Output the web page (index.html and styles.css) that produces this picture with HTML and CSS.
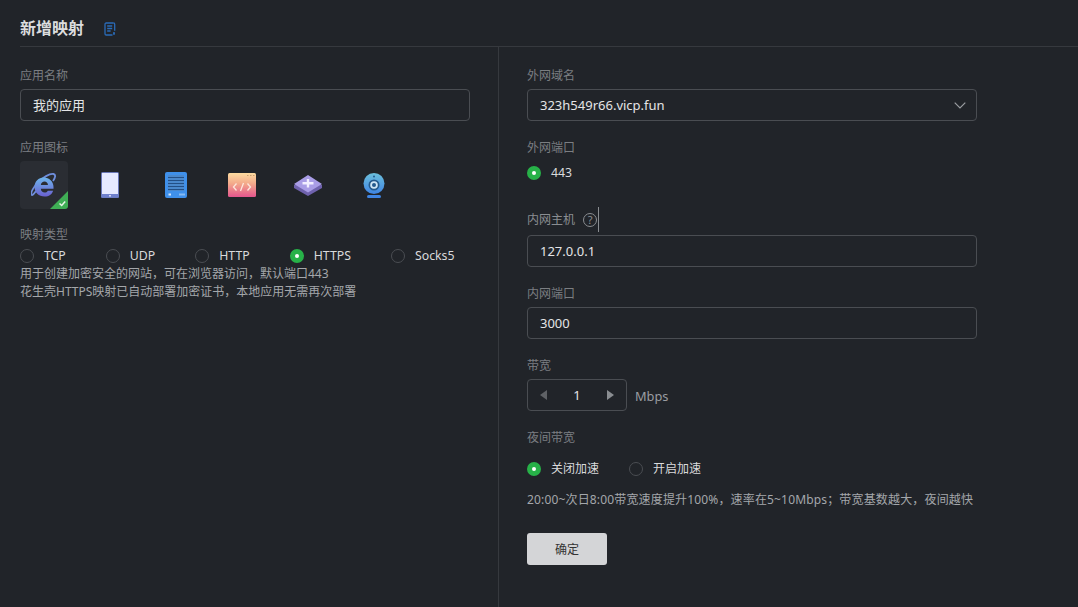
FILE: index.html
```html
<!DOCTYPE html>
<html lang="en">

<head>
    <meta charset="UTF-8">
    <meta name="viewport" content="width=device-width, initial-scale=1.0">
    <title>新增映射</title>
    <link rel="stylesheet" href="styles.css">
</head>

<body>

    <!-- Header -->
    <div class="page-head">
        <div class="page-head-inner">
            <h1>新增映射</h1>
            <svg class="doc-icon" width="12" height="14" viewBox="0 0 12 14" fill="none" stroke="#2a6bb8" stroke-width="1.3">
                <path d="M9.5 1H2.2C1.5 1 1 1.5 1 2.2v9.6c0 .7.5 1.2 1.2 1.2h6.3" />
                <path d="M9.5 1c.8 0 1.2.5 1.2 1.2v6.6" />
                <path d="M3.2 4h5M3.2 6.5h5M3.2 9h3.4" />
                <path d="M9 11h2M10 10.5v2.5" />
            </svg>
        </div>
    </div>

    <div class="columns">

        <!-- Left column -->
        <div class="col-left">
            <div class="label">应用名称</div>
            <div class="input">我的应用</div>

            <div class="label label-icons">应用图标</div>
            <div class="icon-row">
                <div class="icon-tile selected">
                    <svg width="26" height="26" viewBox="0 0 26 26" fill="none">
                        <defs>
                            <linearGradient id="ieGrad" x1="0" y1="0" x2="0" y2="1">
                                <stop offset="0" stop-color="#6fb6ec" />
                                <stop offset="1" stop-color="#6a60d0" />
                            </linearGradient>
                        </defs>
                        <path d="M5 19c-2.500 3.500-4 5-4.500 3.500-.6-2 2-7 6-11.500C11.500 5.500 19 1.200 22.500 2c2.500.6 2 3.500-.5 7" stroke="#6f8edc" stroke-width="1.800" />
                        <path d="M3.500 15C3.500 9.500 7.500 5.500 12.800 5.500S22.500 9.500 22.500 15v1.800H9.800c.3 2.500 1.700 3.800 3.800 3.800 1.500 0 2.600-.6 3.200-1.900h5.300c-1.100 3.700-4.200 5.800-8.500 5.800C7.700 24.500 3.500 20.600 3.500 15zM9.800 13h7.200c-.2-2.100-1.600-3.400-3.500-3.400S10.100 10.900 9.800 13z" fill="url(#ieGrad)" fill-rule="evenodd" />
                    </svg>
                    <svg class="check-corner" width="18" height="18" viewBox="0 0 18 18">
                        <path d="M18 0V15a3 3 0 0 1-3 3H0z" fill="#3fae55" />
                        <path d="M9.500 12.500l2.200 2 3.500-4" fill="none" stroke="#e8f5ea" stroke-width="1.500" />
                    </svg>
                </div>
                <div class="icon-tile">
                    <svg width="18" height="26" viewBox="0 0 18 26">
                        <rect x="0" y="0" width="18" height="26" rx="1.500" fill="#6b78b8" />
                        <rect x="1" y="1" width="16" height="21" fill="#e6e9ff" />
                        <rect x="0.500" y="22" width="17" height="3.500" fill="#6f80cc" />
                        <rect x="8.200" y="23" width="1.600" height="1.600" fill="#e6e9ff" />
                    </svg>
                </div>
                <div class="icon-tile">
                    <svg width="22" height="26" viewBox="0 0 22 26">
                        <rect width="22" height="26" rx="2" fill="#3f90ea" />
                        <rect x="3" y="3" width="16" height="16" fill="#4a88cc" />
                        <path d="M3 5.500h16M3 8.500h16M3 11.500h16M3 14.500h16M3 17.500h16" stroke="#234f86" stroke-width="1" />
                        <rect x="3.500" y="21.500" width="2.500" height="2" fill="#cfe4fb" />
                        <path d="M15 21.500v2M17 21.500v2M19 21.500v2" stroke="#cfe4fb" stroke-width="1" />
                    </svg>
                </div>
                <div class="icon-tile">
                    <svg width="28" height="24" viewBox="0 0 28 24" fill="none">
                        <defs>
                            <linearGradient id="codeGrad" x1="0" y1="0" x2="0" y2="1">
                                <stop offset="0" stop-color="#fddca0" />
                                <stop offset="0.450" stop-color="#f3a88a" />
                                <stop offset="1" stop-color="#e4558d" />
                            </linearGradient>
                        </defs>
                        <rect width="28" height="24" rx="1.500" fill="url(#codeGrad)" />
                        <path d="M19 2.500h1.500M22 2.500h1.500M25 2.500h1.500" stroke="#c9a070" stroke-width="1" />
                        <path d="M8.500 10.500l-3 3.500 3 3.500M19.500 10.500l3 3.500-3 3.500M15.500 10l-3 8" stroke="#fde6dc" stroke-width="1.300" />
                    </svg>
                </div>
                <div class="icon-tile">
                    <svg width="28" height="21" viewBox="0 0 28 21">
                        <path d="M0 10v3l14 8 14-8v-3z" fill="#6f62ad" />
                        <path d="M14 0L28 9 14 17.500 0 9z" fill="#a99de6" />
                        <path d="M12.800 4h2.400v3h4.300v2.400h-4.300v3h-2.400v-3H8.500V7h4.300z" fill="#f1eeff" />
                    </svg>
                </div>
                <div class="icon-tile">
                    <svg width="22" height="25" viewBox="0 0 22 25">
                        <defs>
                            <linearGradient id="camGrad" x1="0" y1="0" x2="0" y2="1">
                                <stop offset="0" stop-color="#6cc0dc" />
                                <stop offset="1" stop-color="#3f84e2" />
                            </linearGradient>
                        </defs>
                        <circle cx="11" cy="10.500" r="10.500" fill="url(#camGrad)" />
                        <circle cx="11" cy="12" r="5.500" fill="#245a8c" />
                        <circle cx="11" cy="12" r="3.800" fill="#cfe6f5" />
                        <circle cx="11" cy="12" r="2" fill="#245a8c" />
                        <circle cx="11" cy="3.500" r="1" fill="#245a8c" />
                        <rect x="4" y="22" width="14" height="3" rx="1.500" fill="#3f84e2" />
                    </svg>
                </div>
            </div>

            <div class="label label-type">映射类型</div>
            <div class="radio-row">
                <div class="radio"><span class="dot"></span>TCP</div>
                <div class="radio"><span class="dot"></span>UDP</div>
                <div class="radio"><span class="dot"></span>HTTP</div>
                <div class="radio"><span class="dot on"></span>HTTPS</div>
                <div class="radio"><span class="dot"></span>Socks5</div>
            </div>
            <p class="hint">用于创建加密安全的网站，可在浏览器访问，默认端口443<br>花生壳HTTPS映射已自动部署加密证书，本地应用无需再次部署</p>
        </div>

        <!-- Right column -->
        <div class="col-right">
            <div class="label">外网域名</div>
            <div class="input select">
                323h549r66.vicp.fun
                <svg width="12" height="7" viewBox="0 0 12 7" fill="none" stroke="#9a9da1" stroke-width="1.200">
                    <path d="M.7.7L6 6l5.300-5.300" />
                </svg>
            </div>

            <div class="label gap">外网端口</div>
            <div class="radio-row single">
                <div class="radio"><span class="dot on"></span>443</div>
            </div>

            <div class="label label-help">内网主机 <span class="help">?</span><span class="caret"></span></div>
            <div class="input">127.0.0.1</div>

            <div class="label gap">内网端口</div>
            <div class="input">3000</div>

            <div class="label gap">带宽</div>
            <div class="stepper-row">
                <div class="stepper">
                    <span class="arrow left"></span>
                    <span class="num">1</span>
                    <span class="arrow right"></span>
                </div>
                <span class="unit">Mbps</span>
            </div>

            <div class="label gap">夜间带宽</div>
            <div class="radio-row night">
                <div class="radio"><span class="dot on"></span>关闭加速</div>
                <div class="radio"><span class="dot"></span>开启加速</div>
            </div>
            <p class="hint night-hint">20:00~次日8:00带宽速度提升100%，速率在5~10Mbps；带宽基数越大，夜间越快</p>

            <button class="btn-ok">确定</button>
        </div>
    </div>

</body>

</html>
```

FILE: styles.css
```css
body {
    font-family: "Noto Sans", "Noto Sans CJK SC", sans-serif;
    font-size: 13px;
    background: #212429;
    margin: 0;
    height: 607px;
    overflow: hidden;
    color: #e4e5e6;
    display: flex;
    flex-direction: column;
}

.page-head {
    padding-left: 20px;
}

.page-head-inner {
    height: 46px;
    display: flex;
    align-items: center;
    border-bottom: 1px solid #36393e;
}

h1 {
    font-size: 16px;
    font-weight: 700;
    margin: 10px 0 0;
    color: #dcdddf;
    line-height: 20px;
}

.doc-icon {
    margin-left: 20px;
    margin-top: 12px;
}

.columns {
    flex: 1;
    display: flex;
}

.col-left {
    width: 478px;
    padding: 18px 0 0 20px;
    border-right: 1px solid #36393e;
}

.col-right {
    flex: 1;
    padding: 18px 0 0 28px;
}

.label {
    font-size: 12px;
    line-height: 20px;
    color: #7b7e82;
    padding-top: 1px;
    margin-bottom: 3px;
}

.label.gap {
    margin-top: 16px;
}

.input {
    width: 450px;
    height: 32px;
    box-sizing: border-box;
    border: 1px solid #4a4d52;
    border-radius: 4px;
    padding: 0 12px;
    line-height: 30px;
    color: #e4e5e6;
}

.select {
    display: flex;
    align-items: center;
    justify-content: space-between;
    padding-right: 10px;
}

.label-icons {
    margin-top: 16px;
}

.icon-row {
    display: flex;
    gap: 18px;
}

.icon-tile {
    width: 48px;
    height: 48px;
    display: flex;
    align-items: center;
    justify-content: center;
    border-radius: 4px;
    position: relative;
}

.icon-tile.selected {
    background: #2a2d33;
}

.check-corner {
    position: absolute;
    right: 0;
    bottom: 0;
}

.label-type {
    margin-top: 15px;
    margin-bottom: 1px;
}

.radio-row {
    display: flex;
    gap: 40px;
    line-height: 20px;
}

.radio {
    display: flex;
    align-items: center;
    gap: 10px;
    font-size: 12.3px;
    color: #d9dadc;
}

.dot {
    width: 14px;
    height: 14px;
    box-sizing: border-box;
    border: 1px solid #4a4d52;
    border-radius: 50%;
}

.dot.on {
    background: #27b148;
    border: 5px solid #27b148;
    position: relative;
}

.dot.on::after {
    content: "";
    position: absolute;
    inset: 0;
    background: #fff;
    border-radius: 50%;
}

.hint {
    margin: -1px 0 0;
    font-size: 12px;
    line-height: 18px;
    color: #a4a7ab;
}

.single {
    margin-top: 5px;
}

.label-help {
    margin-top: 25px;
    margin-bottom: 5px;
    display: flex;
    align-items: center;
    gap: 8px;
    height: 21px;
    color: #8a8d91;
}

.help {
    width: 14px;
    height: 14px;
    box-sizing: border-box;
    border: 1px solid #8a8d91;
    border-radius: 50%;
    font-size: 11px;
    line-height: 12px;
    text-align: center;
}

.caret {
    width: 1px;
    height: 25px;
    background: #8a8d91;
    margin-left: -7px;
}

.stepper-row {
    display: flex;
    align-items: center;
    gap: 8px;
}

.stepper {
    width: 100px;
    height: 32px;
    box-sizing: border-box;
    border: 1px solid #4a4d52;
    border-radius: 4px;
    display: flex;
    align-items: center;
    justify-content: space-between;
    padding: 0 12px;
}

.num {
    color: #e4e5e6;
}

.arrow {
    width: 0;
    height: 0;
    border-top: 5px solid transparent;
    border-bottom: 5px solid transparent;
}

.arrow.left {
    border-right: 7px solid #5f6266;
}

.arrow.right {
    border-left: 7px solid #8a8d91;
}

.unit {
    color: #9a9da1;
    padding-top: 1px;
    font-size: 12.8px;
}

.night {
    margin-top: 11px;
    gap: 30px;
}

.night .radio {
    font-size: 12px;
}

.night-hint {
    margin-top: 12px;
    letter-spacing: 0.16px;
}

.btn-ok {
    display: block;
    margin-top: 24px;
    width: 80px;
    height: 32px;
    background: #d4d5d7;
    border: none;
    border-radius: 3px;
    color: #333;
    font-family: inherit;
    font-size: 12px;
}
```
